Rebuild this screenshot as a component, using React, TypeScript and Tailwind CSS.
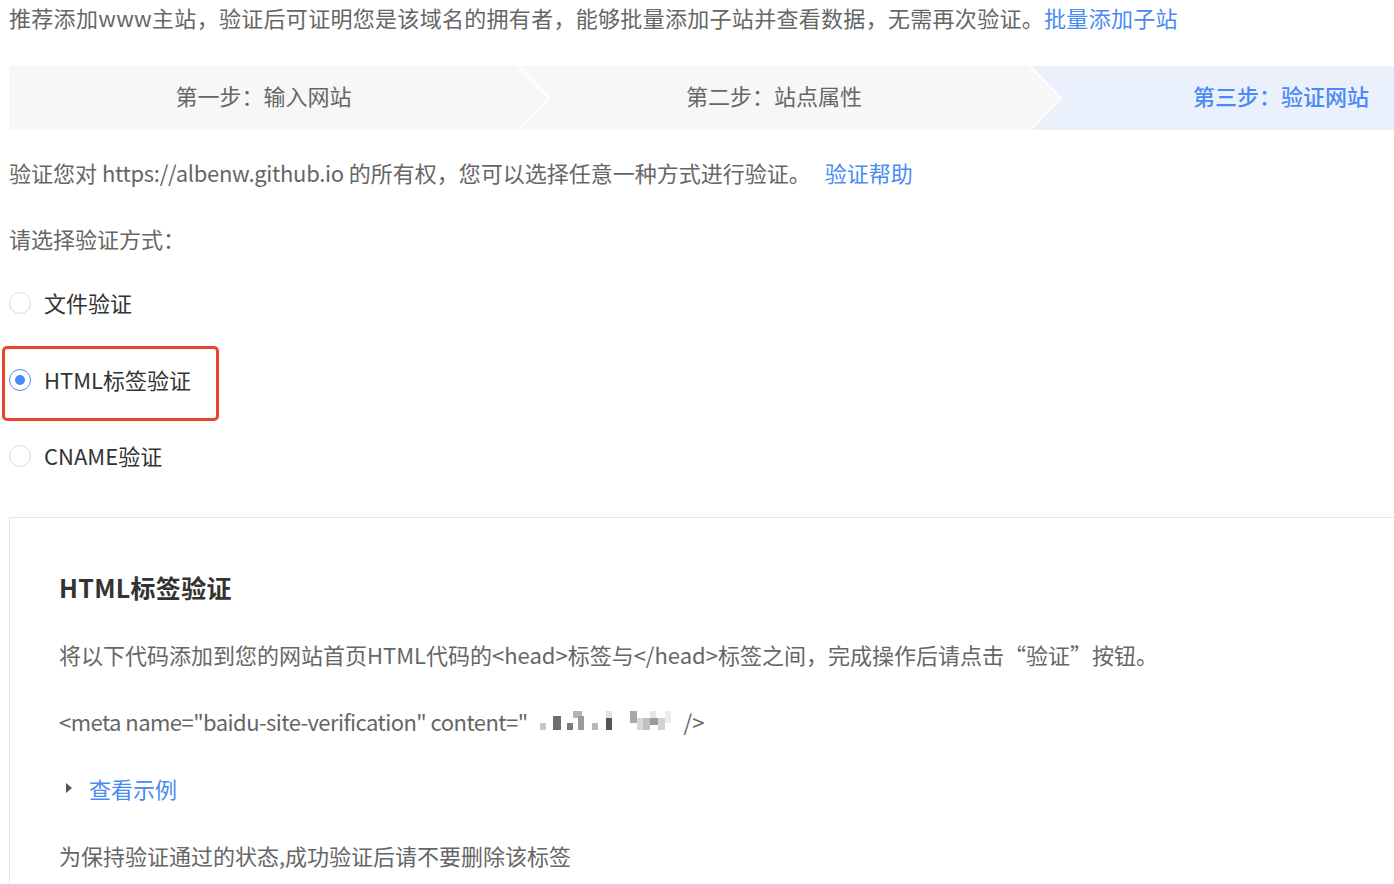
import React from "react";

const font = { fontFamily: '"Noto Sans CJK SC", "Noto Sans", sans-serif' };

function Radio({ checked }: { checked?: boolean }) {
  return checked ? (
    <span className="flex h-[22px] w-[22px] items-center justify-center rounded-full border border-[#4a8af4] bg-white">
      <span className="h-[10px] w-[10px] rounded-full bg-[#4a8af4]" />
    </span>
  ) : (
    <span className="h-[22px] w-[22px] rounded-full border border-[#d9d9d9] bg-white" />
  );
}

function Blur() {
  const rects: [number, number, number, number, string][] = [
    [12, 12, 6, 7, "#c8c8c8"],
    [25, 5, 8, 14, "#6e6e6e"],
    [39, 12, 6, 7, "#7a7a7a"],
    [45, 0, 9, 7, "#b4b4b4"],
    [50, 5, 6, 14, "#9a9a9a"],
    [64, 12, 6, 7, "#b8b8b8"],
    [78, 0, 6, 7, "#e0e0e0"],
    [78, 7, 6, 12, "#555555"],
    [102, 0, 7, 12, "#a8a8a8"],
    [109, 7, 6, 12, "#d8d8d8"],
    [115, 7, 7, 12, "#c0c0c0"],
    [122, 0, 6, 7, "#e6e6e6"],
    [122, 7, 8, 7, "#9c9c9c"],
    [130, 7, 7, 12, "#d2d2d2"],
    [137, 0, 6, 12, "#ececec"],
  ];
  return (
    <svg width="150" height="20" viewBox="0 0 150 20" className="inline-block">
      {rects.map(([x, y, w, h, c], i) => (
        <rect key={i} x={x} y={y} width={w} height={h} fill={c} />
      ))}
    </svg>
  );
}

export default function App() {
  return (
    <div className="w-[1394px] overflow-hidden bg-white text-[22px] leading-[30px] text-[#666]" style={font}>
      <div className="w-[1560px] pl-[9px]">
        <div className="pt-[2px] tracking-[0.3px]">
          推荐添加www主站，验证后可证明您是该域名的拥有者，能够批量添加子站并查看数据，无需再次验证。
          <span className="text-[#4a8af4]">批量添加子站</span>
        </div>

        {/* Steps bar */}
        <div className="relative mt-[34px] flex h-[64px] bg-[#f7f7f7]">
          <div className="flex w-[509px] items-center justify-center pb-[6px] text-[#666]">第一步：输入网站</div>
          <div className="flex w-[512px] items-center justify-center pb-[6px] text-[#666]">第二步：站点属性</div>
          <div
            className="flex flex-1 items-center justify-center bg-[#eaf1fd] pb-[6px] font-medium text-[#4a8af4]"
            style={{ clipPath: "polygon(0 0, 100% 0, 100% 100%, 0 100%, 31px 50%)" }}
          >
            <span className="pr-[28px]">第三步：验证网站</span>
          </div>
          <svg className="absolute left-[507px] top-0" width="36" height="64" viewBox="0 0 36 64">
            <polyline points="2,0 33,32 2,64" fill="none" stroke="#ffffff" strokeWidth="2" />
          </svg>
          <svg className="absolute left-[1019px] top-0" width="36" height="64" viewBox="0 0 36 64">
            <polyline points="2,0 33,32 2,64" fill="none" stroke="#ffffff" strokeWidth="2" />
          </svg>
        </div>

        <div className="mt-[27px]">
          验证您对 <span className="tracking-[-0.3px]">https://albenw.github.io</span> 的所有权，您可以选择任意一种方式进行验证。
          <span className="ml-[14px] text-[#4a8af4]">验证帮助</span>
        </div>
        <div className="mt-[36px]">请选择验证方式：</div>

        <div className="mt-[35px] flex flex-col gap-[46.5px] text-[#333]">
          <div className="flex h-[30px] items-center gap-[13px]">
            <Radio />
            <span className="-translate-y-[1px]">文件验证</span>
          </div>
          <div className="relative flex h-[30px] items-center gap-[13px]">
            <div className="absolute left-[-7px] top-[-19px] h-[75px] w-[217px] rounded-[5px] border-[3px] border-[#e8442e]" />
            <Radio checked />
            <span className="-translate-y-[1px]">HTML标签验证</span>
          </div>
          <div className="flex h-[30px] items-center gap-[13px]">
            <Radio />
            <span className="-translate-y-[1px]">CNAME验证</span>
          </div>
        </div>

        {/* Panel */}
        <div className="mt-[46px] border-l border-t border-[#e5e5e5] pb-[20px] pl-[49px] pt-[54px]">
          <div className="text-[25px] font-bold leading-[30px] tracking-[0.3px] text-[#333]">HTML标签验证</div>
          <div className="mt-[37px]">
            将以下代码添加到您的网站首页HTML代码的&lt;head&gt;标签与&lt;/head&gt;标签之间，完成操作后请点击“验证”按钮。
          </div>
          <div className="mt-[37px] flex items-center">
            <span className="tracking-[-0.55px]">&lt;meta name="baidu-site-verification" content="</span>
            <Blur />
            <span className="ml-[6px]">/&gt;</span>
          </div>
          <div className="mt-[37px] flex items-center">
            <svg width="30" height="12" viewBox="0 0 30 12">
              <polygon points="7,1 13,6 7,11" fill="#555" />
            </svg>
            <span className="text-[#4a8af4]">查看示例</span>
          </div>
          <div className="mt-[37px]">为保持验证通过的状态,成功验证后请不要删除该标签</div>
        </div>
      </div>
    </div>
  );
}
